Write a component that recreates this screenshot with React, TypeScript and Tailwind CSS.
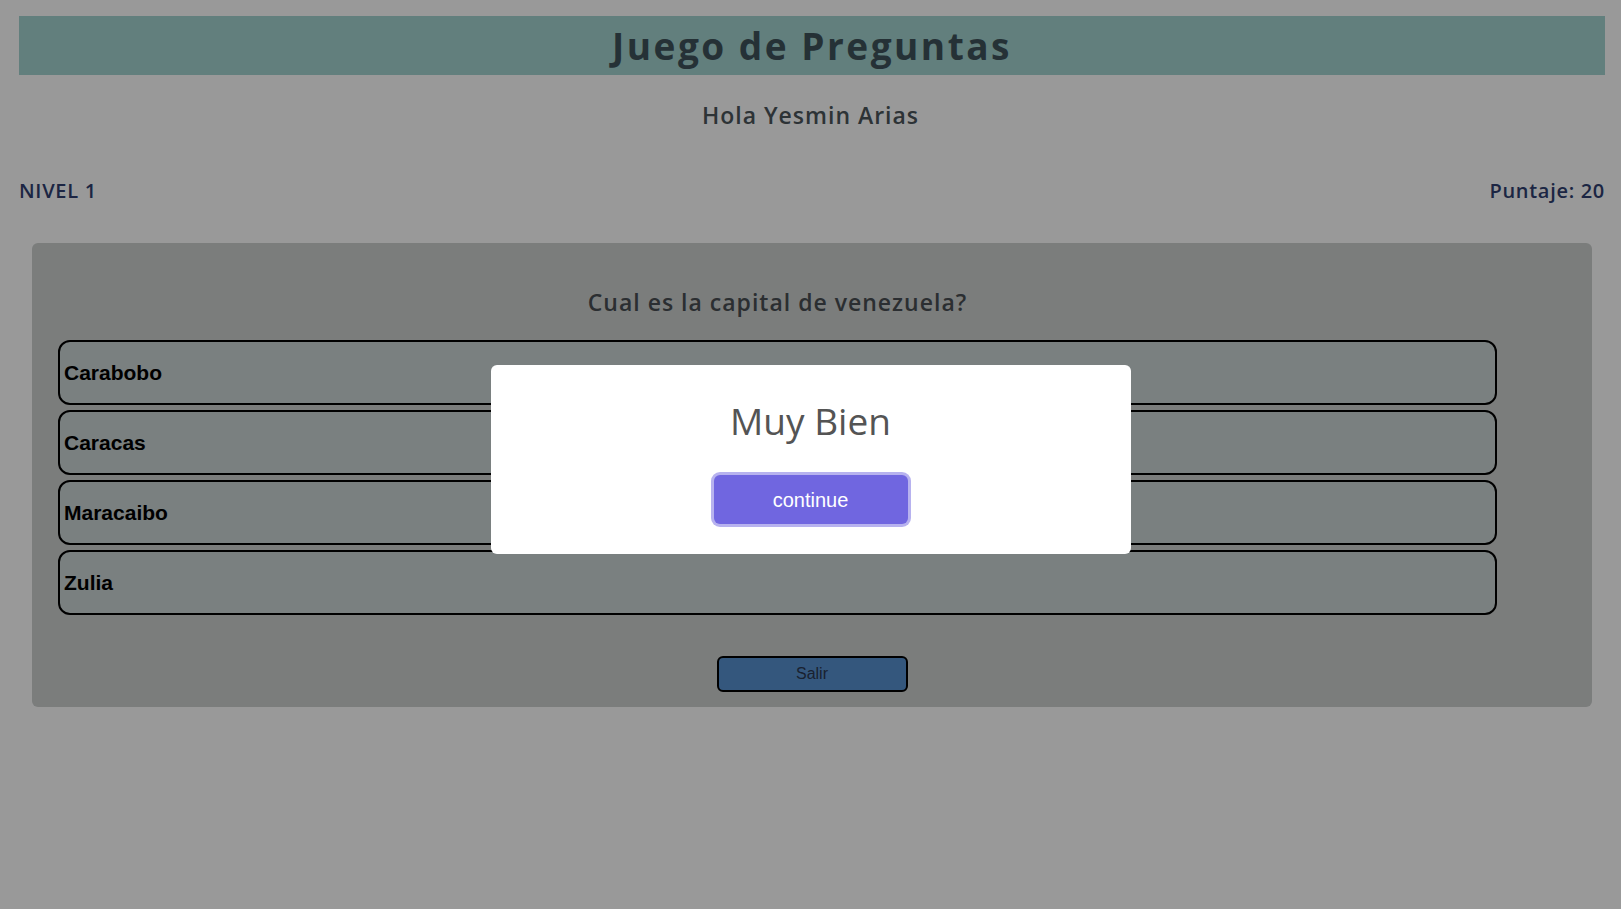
import React from 'react';

const opciones = ['Carabobo', 'Caracas', 'Maracaibo', 'Zulia'];

const App: React.FC = () => {
  return (
    <div className="min-h-screen bg-white font-['Open_Sans',sans-serif]">
      {/* Cabecera */}
      <header className="ml-[19px] mr-[16px] pt-4">
        <div className="h-[59px] bg-[#a3d4d0] flex items-center justify-center">
          <h1 className="text-[37px] font-bold tracking-[2.5px] text-[#3f535a] leading-none">
            Juego de Preguntas
          </h1>
        </div>
      </header>

      <p className="mt-[25px] text-center text-[23px] leading-[30px] font-semibold tracking-[1px] text-[#4b555a]">
        Hola Yesmin Arias
      </p>

      {/* Nivel y puntaje */}
      <div className="ml-[19px] mr-[16px] mt-[47px] flex justify-between text-[20px] leading-[28px] font-semibold tracking-[0.7px] text-[#2f3f71]">
        <span>NIVEL 1</span>
        <span>Puntaje: 20</span>
      </div>

      {/* Tarjeta de la pregunta */}
      <section className="ml-[32px] mr-[29px] mt-[38px] rounded-md bg-[#cdd0cf] pt-[44px] pb-[15px]">
        <div className="ml-[26px] mr-[95px]">
          <h2 className="text-center text-[23px] leading-[30px] font-semibold tracking-[1px] text-[#484e52]">
            Cual es la capital de venezuela?
          </h2>
          <div className="mt-[23px] flex flex-col gap-[5px]">
            {opciones.map((op) => (
              <button
                key={op}
                className="h-[65px] w-full rounded-xl border-2 border-black bg-[#cbd5d5] px-1 text-left font-['Liberation_Sans',Arial,sans-serif] text-[21px] font-bold text-black"
              >
                {op}
              </button>
            ))}
          </div>
        </div>
        <div className="mt-[41px] flex justify-center">
          <button className="h-[36px] w-[191px] rounded-md border-2 border-black bg-[#5791d0] font-['Liberation_Sans',Arial,sans-serif] text-[16px] text-[#2b3750]">
            Salir
          </button>
        </div>
      </section>

      {/* Alerta */}
      <div className="fixed inset-0 flex items-center justify-center bg-black/40">
        <div className="mt-[10px] w-[640px] rounded-md bg-white pt-[33px] pb-[30px] flex flex-col items-center">
          <h2 className="text-[37px] leading-[45px] text-[#545454] font-['Open_Sans',sans-serif]">
            Muy Bien
          </h2>
          <button className="mt-[32px] h-[49px] w-[194px] rounded-md bg-[#7066e0] font-['Liberation_Sans',Arial,sans-serif] text-[20px] text-white ring-[3px] ring-[#b7b2ef]">
            continue
          </button>
        </div>
      </div>
    </div>
  );
};

export default App;
